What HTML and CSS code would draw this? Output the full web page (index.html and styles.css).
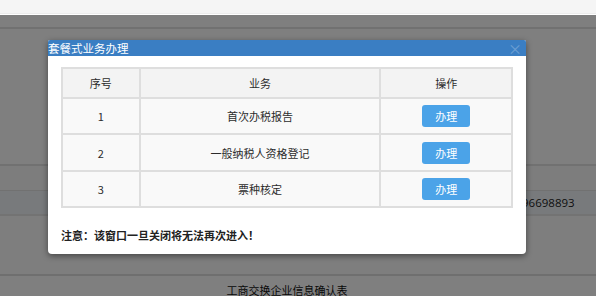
FILE: index.html
```html
<!DOCTYPE html>
<html>
<head>
  <meta charset="utf-8">
  <link rel="stylesheet" href="styles.css">
</head>
<body>
  <div class="topbar"></div>

  <div class="page">
    <div class="page-head"></div>
    <div class="page-block"></div>
    <div class="page-row"></div>
    <div class="page-row page-row-info">
      <span></span>
      <span class="phone">96698893</span>
    </div>
    <div class="page-block page-block-low"></div>
    <div class="page-row page-row-title">工商交换企业信息确认表</div>
  </div>

  <div class="mask"></div>

  <div class="dialog">
    <div class="dialog-title">
      <span>套餐式业务办理</span>
      <span class="dialog-close">×</span>
    </div>
    <div class="dialog-body">
      <table class="biz-table">
        <thead>
          <tr>
            <th class="col-no">序号</th>
            <th class="col-name">业务</th>
            <th class="col-op">操作</th>
          </tr>
        </thead>
        <tbody>
          <tr>
            <td>1</td>
            <td>首次办税报告</td>
            <td><button class="do-btn">办理</button></td>
          </tr>
          <tr>
            <td>2</td>
            <td>一般纳税人资格登记</td>
            <td><button class="do-btn">办理</button></td>
          </tr>
          <tr>
            <td>3</td>
            <td>票种核定</td>
            <td><button class="do-btn">办理</button></td>
          </tr>
        </tbody>
      </table>
      <p class="notice">注意：该窗口一旦关闭将无法再次进入！</p>
    </div>
  </div>
</body>
</html>
```

FILE: styles.css
```css
* {
  margin: 0;
  padding: 0;
  box-sizing: border-box;
  font-family: "Noto Sans CJK SC", "Noto Sans", sans-serif;
}

body {
  width: 596px;
  height: 296px;
  background: #fff;
  overflow: hidden;
  position: relative;
  font-size: 11px;
  color: #333;
}

.topbar {
  height: 14px;
  background: #f5f5f5;
  border-bottom: 1px solid #ececec;
}

/* page underneath the mask */
.page-head {
  height: 15px;
  border-bottom: 2px solid #e2e2e2;
}

.page-block {
  height: 137px;
  border-bottom: 2px solid #e2e2e2;
}

.page-row {
  height: 25px;
  border-bottom: 1px solid #e2e2e2;
  background: #fafafa;
}

.page-row-info {
  display: grid;
  grid-template-columns: 522px 1fr;
  align-items: center;
  background: #f1f5f9;
  border-bottom: 2px solid #e6e6e6;
}

.phone {
  font-family: "Open Sans", "Liberation Sans", sans-serif;
  font-size: 11.5px;
  color: #222;
}

.page-block-low {
  height: 60px;
  background: #fdfdfd;
  border-bottom: 2px solid #dedede;
}

.page-row-title {
  background: #fff;
  text-align: center;
  padding-top: 6px;
  padding-right: 22px;
  font-size: 11px;
  color: #111;
}

.mask {
  position: absolute;
  top: 15px;
  left: 0;
  right: 0;
  bottom: 0;
  background: rgba(0, 0, 0, 0.5);
}

/* dialog */
.dialog {
  position: absolute;
  top: 40px;
  left: 48px;
  width: 478px;
  height: 214px;
  background: #fff;
  border-radius: 2px 2px 4px 4px;
  box-shadow: 0 2px 6px rgba(0, 0, 0, 0.45);
}

.dialog-title {
  height: 16px;
  background: #3a7ec3;
  color: #fff;
  line-height: 16px;
  font-size: 11.5px;
  display: flex;
  justify-content: space-between;
  border-radius: 2px 2px 0 0;
}

.dialog-close {
  color: #6d9fd3;
  font-size: 14px;
  padding-right: 4px;
}

.dialog-body {
  padding: 11px 13px 0;
}

.biz-table {
  width: 452px;
  border-collapse: collapse;
  border: 2px solid #dedede;
  background: #f9f9f9;
}

.biz-table th,
.biz-table td {
  border: 2px solid #dedede;
  text-align: center;
  font-weight: normal;
  color: #2c2c2c;
}

.biz-table th {
  height: 30px;
  background: #f3f3f3;
}

.biz-table td {
  height: 37px;
}

.biz-table tr:first-child td,
.biz-table tr:last-child td {
  height: 36px;
}

.col-no { width: 78px; }
.col-name { width: 242px; }
.col-op { width: 132px; }

.do-btn {
  width: 48px;
  height: 22px;
  border: none;
  border-radius: 3px;
  background: #4ba3e8;
  color: #fff;
  font-size: 11px;
  display: block;
  margin: 0 auto;
}

.notice {
  margin-top: 19px;
  font-weight: bold;
  color: #222;
}
```
